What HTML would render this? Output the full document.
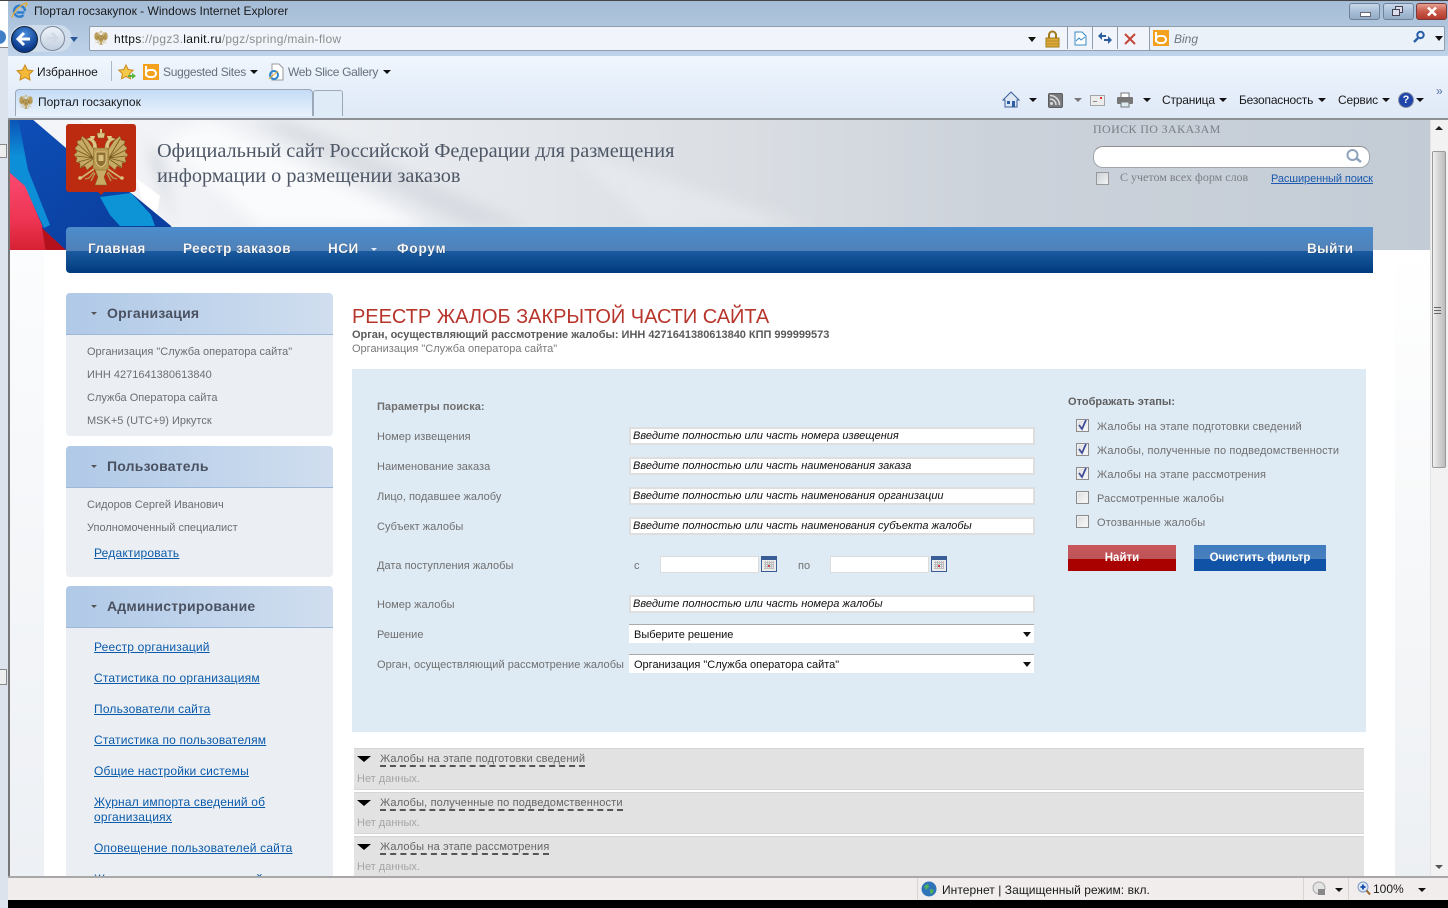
<!DOCTYPE html>
<html lang="ru"><head><meta charset="utf-8"><title>Портал госзакупок</title>
<style>
html,body{margin:0;padding:0;width:1448px;height:908px;overflow:hidden;background:#fff}
body{position:relative;font-family:"Liberation Sans",Arial,sans-serif;font-size:11px;color:#666}
.a,.t{position:absolute}
.t{white-space:nowrap;line-height:14px}
.c{color:#1a1a1a;font-size:12px}
.s{color:#6b6f75;font-size:11px;margin-top:1px}
.l{color:#0a5bab;font-size:12px;letter-spacing:.19px;text-decoration:underline}
.f{color:#707070;font-size:11px;letter-spacing:.03px;margin-top:1px}
.k{letter-spacing:.14px}
.in{position:absolute;left:629px;width:400px;height:14px;background:#fff;border:2px solid #dedede;font:italic 11px/14px "Liberation Sans",sans-serif;color:#111;padding-left:2px;white-space:nowrap;box-sizing:content-box}
.sel{position:absolute;left:629px;width:405px;height:18px;background:#fff;border-top:1px solid #aaa;font:11px/20px "Liberation Sans",sans-serif;color:#111;text-indent:5px;white-space:nowrap}
.sel:after{content:"";position:absolute;width:0;height:0;border:4px solid transparent;border-top:5px solid #111;border-bottom:0;right:3px;top:7px}
.ph{position:absolute;left:66px;width:267px;height:41px;border-radius:4px 4px 0 0;background:linear-gradient(90deg,#b0c9e7,#d0deef);border-bottom:1px solid #9db7d6}
.ph b{position:absolute;left:41px;top:12px;font-size:14px;line-height:16px;color:#4a5161;white-space:nowrap;letter-spacing:.2px}
.ph i{position:absolute;left:25px;top:19px;width:0;height:0;border:3px solid transparent;border-top:3px solid #555;border-bottom:0}
.pb{position:absolute;left:66px;width:267px;background:#ebeef2}
.cb{position:absolute;left:1076px;width:13px;height:13px;box-sizing:border-box;border:1px solid #8c8c8c;background:linear-gradient(135deg,#dcdcdc,#fafafa);box-shadow:inset 0 0 0 1px #f1f1f1}
.cb svg{position:absolute;left:0;top:-1px}
.gr{position:absolute;left:354px;width:1010px;background:#e2e2e2;border-bottom:1px solid #d6d6d6;border-top:1px solid #d6d6d6}
.gr i{position:absolute;left:3px;top:7px;width:0;height:0;border:7px solid transparent;border-top:6px solid #000;border-bottom:0}
.gr span{position:absolute;left:26px;top:4px;font-size:11px;line-height:12px;color:#666;white-space:nowrap;border-bottom:2px dashed #555;letter-spacing:.15px}
.gr em{position:absolute;left:3px;top:23px;font:11px/14px "Liberation Sans",sans-serif;color:#a5a5a5;white-space:nowrap}
.mt{font-size:13.5px;font-weight:bold;color:#f4f6fa;text-shadow:0 0 1px #234;letter-spacing:.5px;line-height:16px}
.ar{position:absolute;width:0;height:0;border:4px solid transparent;border-top:4px solid #111;border-bottom:0}
.sep{position:absolute;width:1px;background:#aab7c7}
.cm{letter-spacing:-.2px}
.g{font-size:12px;color:#666f7a;letter-spacing:-.3px}
</style></head><body>

<svg width="0" height="0" style="position:absolute"><defs>
<symbol id="eagle" viewBox="0 0 56 62">
<g id="halfL">
<path d="M21 22L15 13 9 8 8 12 4 13 5 17 2 20 4 24 1 27 4 30 3 34 7 35 7 40 12 38 14 42 21 36z" fill="#c7aa63" stroke="#7e6128" stroke-width=".5"/>
<path d="M20 30L9 11M20 30L5 16M20 30L3 22M20 30L3 28M20 30L5 34M20 31L8 39" stroke="#75591f" stroke-width=".8"/>
<path d="M25 25c-1-6-1-10-3-12-2-3-4-4-6-3l-3 1 4 2c2 1 3 3 3 7z" fill="#dcc484" stroke="#7e6128" stroke-width=".5"/>
<path d="M17 8h5l-1 3h-3z" fill="#e0c988"/>
<path d="M21 41L8 50" stroke="#cfb26b" stroke-width="1.800"/>
<path d="M21 44l-5 6-4 1M22 45l-4 8" fill="none" stroke="#b5964f" stroke-width="1.400"/>
<circle cx="7" cy="50" r="1.800" fill="#dcc484"/>
</g>
<use href="#halfL" transform="matrix(-1 0 0 1 56 0)"/>
<path d="M24 5h8l-1 5h-6z" fill="#dcc484" stroke="#7e6128" stroke-width=".5"/>
<path d="M28 1v4" stroke="#dcc484" stroke-width="2"/>
<path d="M21 20h14l1 20-8 6-8-6z" fill="#b99a50" stroke="#7e6128" stroke-width=".5"/>
<path d="M22 42h12l-3 7 3 8h-12l3-8z" fill="#c7aa63" stroke="#7e6128" stroke-width=".5"/>
<path d="M23 24h10v9c0 3-3 5-5 6-2-1-5-3-5-6z" fill="#8f7030" stroke="#e6d193" stroke-width=".8"/>
<path d="M25.500 27h5v6h-5z" fill="#d8bf7d"/>
</symbol></defs></svg>

<!-- left strip -->
<div class="a" style="left:0;top:0;width:9px;height:908px;background:#dde3ec"></div>
<div class="a" style="left:0;top:0;width:9px;height:48px;background:#fff"></div>
<div class="a" style="left:0;top:47px;width:9px;height:1px;background:#888"></div>
<div class="a" style="left:-8px;top:30px;width:14px;height:14px;border-radius:50%;background:#3f7ec4"></div>
<div class="a" style="left:0;top:144px;width:6px;height:12px;background:#eee;border:1px solid #888;border-left:0"></div>
<div class="a" style="left:0;top:669px;width:6px;height:14px;background:#eee;border:1px solid #888;border-left:0"></div>
<div class="a" style="left:8px;top:118px;width:2px;height:760px;background:#777"></div>

<!-- IE chrome -->
<div class="a" style="left:8px;top:0;width:1440px;height:57px;background:linear-gradient(180deg,#a5bcd6 0,#aec4dd 40%,#bfd4ea 100%)"></div>
<div class="a" style="left:0;top:0;width:1448px;height:1px;background:#444"></div>
<div class="a" style="left:8px;top:56px;width:1440px;height:62px;background:linear-gradient(180deg,#f1f7fe 0,#e9f1fb 30%,#dfe9f7 100%)"></div>
<div class="a" style="left:8px;top:118px;width:1440px;height:2px;background:#8e9296"></div>

<!-- IE logo -->
<svg class="a" style="left:11px;top:2px" width="17" height="17" viewBox="0 0 17 17"><path d="M13.500 10.500H5.500M14 9a5.500 5.500 0 10-1.500 4" fill="none" stroke="#2f7fce" stroke-width="2.400"/><path d="M1 15.500C3 9 9 3 15 1c2 0 0 3-1 4" fill="none" stroke="#e3ac36" stroke-width="1.400"/></svg>
<div class="t c" style="left:34px;top:4px">Портал госзакупок - Windows Internet Explorer</div>

<!-- window buttons -->
<div class="a" style="left:1349px;top:3px;width:29px;height:15px;border:1px solid #6f8299;border-radius:3px;background:linear-gradient(180deg,#c8d8ea 0,#a9bfd7 50%,#93abc6 100%)"><div class="a" style="left:10px;top:8px;width:9px;height:3px;background:#fff;border:1px solid #667"></div></div>
<div class="a" style="left:1383px;top:3px;width:29px;height:15px;border:1px solid #6f8299;border-radius:3px;background:linear-gradient(180deg,#c8d8ea 0,#a9bfd7 50%,#93abc6 100%)"><div class="a" style="left:11px;top:2px;width:6px;height:5px;border:1.500px solid #445;background:#dde"></div><div class="a" style="left:8px;top:5px;width:6px;height:5px;border:1.500px solid #445;background:#dde"></div></div>
<div class="a" style="left:1416px;top:3px;width:29px;height:15px;border:1px solid #7a3a3a;border-radius:3px;background:linear-gradient(180deg,#e6a090 0,#c9594a 50%,#b33a2c 100%)"><svg class="a" style="left:9px;top:2px" width="12" height="11"><path d="M2 1.500l8 8M10 1.500l-8 8" stroke="#fff" stroke-width="2.600"/></svg></div>

<!-- nav buttons -->
<div class="a" style="left:10px;top:25px;width:62px;height:27px;border-radius:14px;background:#cfdcec"></div>
<div class="a" style="left:11px;top:26px;width:25px;height:25px;border-radius:50%;background:radial-gradient(circle at 50% 30%,#4a8fe0,#0b3a8c 70%);border:1px solid #123"></div>
<svg class="a" style="left:14px;top:30px" width="20" height="18"><path d="M10 3L4 9l6 6M4 9h12" fill="none" stroke="#fff" stroke-width="3"/></svg>
<div class="a" style="left:40px;top:26px;width:23px;height:23px;border-radius:50%;background:linear-gradient(180deg,#eef3f9,#c2cfdf);border:1px solid #7d8a9b"></div>
<svg class="a" style="left:43px;top:31px" width="18" height="15"><path d="M9 2l5 5-5 5M14 7H4" fill="none" stroke="#cfd8e3" stroke-width="2.500"/></svg>
<div class="a" style="left:70px;top:37px;width:0;height:0;border:4px solid transparent;border-top:5px solid #2a5a9a;border-bottom:0"></div>

<!-- address bar -->
<div class="a" style="left:89px;top:26px;width:1105px;height:23px;background:#f1f5fb;border:1px solid #8f9dac;border-radius:2px"></div>
<svg class="a" style="left:93px;top:30px" width="16" height="16"><use href="#eagle" width="16" height="16"/></svg>
<div class="t" style="left:114px;top:32px;font-size:12px;color:#8c8c8c;letter-spacing:.3px"><span style="color:#111">https</span>://pgz3.<span style="color:#111">lanit.ru</span>/pgz/spring/main-flow</div>
<div class="ar" style="left:1028px;top:37px;border-top-width:5px"></div>
<svg class="a" style="left:1045px;top:30px" width="15" height="18" viewBox="0 0 15 18"><path d="M4 8V5a3.500 3.500 0 017 0v3" fill="none" stroke="#a07a1a" stroke-width="2"/><rect x="1" y="8" width="13" height="9" fill="#dca93a" stroke="#a07a1a"/><path d="M2 11h11M2 14h11" stroke="#b98d25"/></svg>
<div class="sep" style="left:1067px;top:27px;height:22px;background:#8f9dac"></div>
<div class="sep" style="left:1092px;top:27px;height:22px;background:#8f9dac"></div>
<div class="sep" style="left:1117px;top:27px;height:22px;background:#8f9dac"></div>
<svg class="a" style="left:1074px;top:31px" width="13" height="15"><path d="M1 1h7l4 4v9H1z" fill="#fff" stroke="#3c8ac4"/><path d="M2 10l3-3 2 2 4-3" fill="none" stroke="#3c8ac4"/></svg>
<svg class="a" style="left:1097px;top:31px" width="16" height="14"><path d="M1 5l4-4v3h4v2H5v3zM15 9l-4 4v-3H7V8h4V5z" fill="#2d5f9e"/></svg>
<svg class="a" style="left:1124px;top:33px" width="12" height="12"><path d="M1 1l10 10M11 1L1 11" stroke="#c4453a" stroke-width="2"/></svg>

<!-- search box -->
<div class="a" style="left:1149px;top:26px;width:294px;height:23px;background:#ebf1f9;border:1px solid #8f9dac;border-radius:2px"></div>
<div class="a" style="left:1153px;top:30px;width:16px;height:16px;background:#f4a11f"><div class="a" style="left:2px;top:2px;width:2px;height:10px;background:#fff"></div><div class="a" style="left:2px;top:5px;width:8px;height:5px;border:2px solid #fff;border-radius:5px"></div></div>
<div class="t" style="left:1174px;top:32px;font:italic 12px/14px 'Liberation Sans',sans-serif;color:#6f7780">Bing</div>
<svg class="a" style="left:1412px;top:30px" width="14" height="14"><circle cx="8.500" cy="5" r="3.200" fill="none" stroke="#2a5fa8" stroke-width="2"/><path d="M6 8l-4 4" stroke="#2a5fa8" stroke-width="2.400"/></svg>
<div class="ar" style="left:1435px;top:36px;border-top-width:5px"></div>

<!-- favorites bar -->
<svg class="a" style="left:16px;top:64px" width="18" height="17" viewBox="0 0 18 17"><path d="M9 1l2.400 5 5.600.7-4 3.900 1 5.400L9 13.400 4 16l1-5.400-4-3.900L6.600 6z" fill="#f5b93a" stroke="#c98a1c"/></svg>
<div class="t c" style="left:37px;top:65px">Избранное</div>
<div class="sep" style="left:111px;top:61px;height:20px"></div>
<svg class="a" style="left:118px;top:64px" width="18" height="17" viewBox="0 0 18 17"><path d="M8 1l2.200 4.500 5 .7-3.600 3.500.9 5L8 12.400 3.500 14.700l.9-5L.8 6.200l5-.7z" fill="#f5c94a" stroke="#c98a1c"/><path d="M10 11h4V9l4 3-4 3v-2h-4z" fill="#5ab53c"/></svg>
<div class="a" style="left:143px;top:64px;width:16px;height:16px;background:#f4a11f"><div class="a" style="left:2px;top:2px;width:2px;height:10px;background:#fff"></div><div class="a" style="left:2px;top:5px;width:8px;height:5px;border:2px solid #fff;border-radius:5px"></div></div>
<div class="t g" style="left:163px;top:65px">Suggested Sites</div>
<div class="ar" style="left:250px;top:70px"></div>
<svg class="a" style="left:268px;top:63px" width="16" height="18"><path d="M4 1h7l4 4v12H4z" fill="#fff" stroke="#999"/><circle cx="6" cy="12" r="4" fill="none" stroke="#2f86d0" stroke-width="2"/><path d="M1 16L10 8" stroke="#e6b030"/></svg>
<div class="t g" style="left:288px;top:65px">Web Slice Gallery</div>
<div class="ar" style="left:383px;top:70px"></div>

<!-- tabs -->
<div class="a" style="left:15px;top:89px;width:296px;height:26px;border:1px solid #9aa8b8;border-bottom:0;border-radius:4px 4px 0 0;background:linear-gradient(180deg,#c4dcf7,#e9f2fc)"></div>
<div class="a" style="left:313px;top:90px;width:28px;height:25px;border:1px solid #9aa8b8;border-bottom:0;border-radius:3px 3px 0 0;background:#e0ebf8"></div>
<svg class="a" style="left:18px;top:94px" width="16" height="16"><use href="#eagle" width="16" height="16"/></svg>
<div class="t c" style="left:38px;top:95px">Портал госзакупок</div>

<!-- command bar -->
<svg class="a" style="left:1002px;top:91px" width="18" height="17"><path d="M9 1L1 9h2v7h12V9h2z" fill="#dfe8f2" stroke="#3a5f9a"/><rect x="10" y="10" width="3" height="6" fill="#2a5fa8"/><rect x="5" y="10" width="3" height="3" fill="#2a5fa8"/></svg>
<div class="ar" style="left:1029px;top:98px"></div>
<div class="a" style="left:1048px;top:93px;width:13px;height:13px;border-radius:2px;background:#77797c;border:1px solid #5c5c5c"><svg class="a" style="left:0;top:0" width="12" height="12"><circle cx="2.500" cy="9.500" r="1.500" fill="#ddd"/><path d="M1 5a6 6 0 016 6M1 1.500A9.500 9.500 0 0110.500 11" fill="none" stroke="#ddd" stroke-width="1.500"/></svg></div>
<div class="ar" style="left:1074px;top:98px;border-top-color:#777"></div>
<div class="a" style="left:1090px;top:95px;width:13px;height:9px;background:#ececec;border:1px solid #a5a5a5"><div class="a" style="left:9px;top:1px;width:2px;height:2px;background:#d33"></div><div class="a" style="left:2px;top:5px;width:4px;height:1px;background:#888"></div></div>
<svg class="a" style="left:1116px;top:92px" width="18" height="16"><rect x="5" y="1" width="8" height="5" fill="#fff" stroke="#777"/><rect x="1" y="5" width="16" height="7" rx="1" fill="#777"/><rect x="5" y="10" width="8" height="5" fill="#dcecf5" stroke="#777"/></svg>
<div class="ar" style="left:1143px;top:98px"></div>
<div class="t c cm" style="left:1162px;top:93px">Страница</div><div class="ar" style="left:1219px;top:98px"></div>
<div class="t c cm" style="left:1239px;top:93px">Безопасность</div><div class="ar" style="left:1318px;top:98px"></div>
<div class="t c cm" style="left:1338px;top:93px">Сервис</div><div class="ar" style="left:1382px;top:98px"></div>
<div class="a" style="left:1398px;top:92px;width:14px;height:14px;border-radius:50%;background:#1f45a8;border:1px solid #8a93a5;color:#fff;font:bold 11px/14px 'Liberation Sans';text-align:center">?</div>
<div class="ar" style="left:1416px;top:98px"></div>
<div class="t" style="left:1436px;top:84px;font-size:12px;color:#5570a8">»</div>

<!-- page header -->
<div class="a" style="left:10px;top:120px;width:1420px;height:130px;overflow:hidden;background:#c3ccd6">
<svg width="1420" height="130" viewBox="0 0 1420 130" style="display:block"><defs>
<linearGradient id="g" x1="0" y1="0" x2="1" y2="0"><stop offset="0" stop-color="#f5f6f9"/><stop offset=".13" stop-color="#f0f2f5"/><stop offset=".3" stop-color="#e6e9ed"/><stop offset=".5" stop-color="#dbdfe4"/><stop offset=".7" stop-color="#ccd2da"/><stop offset="1" stop-color="#c3ccd6"/></linearGradient>
<linearGradient id="r" x1="0" y1="0" x2="0" y2="1"><stop offset="0" stop-color="#fb4a72"/><stop offset=".6" stop-color="#ee3553"/><stop offset="1" stop-color="#d52031"/></linearGradient>
<linearGradient id="bl" x1="0" y1="0" x2="1" y2="1"><stop offset="0" stop-color="#0d4fb8"/><stop offset="1" stop-color="#0a3a96"/></linearGradient>
<linearGradient id="cy" x1="0" y1="0" x2="0" y2="1"><stop offset="0" stop-color="#0b52b6"/><stop offset=".35" stop-color="#0d8fd8"/><stop offset="1" stop-color="#0d8fd8"/></linearGradient>
<filter id="b"><feGaussianBlur stdDeviation="7"/></filter></defs>
<rect width="1420" height="130" fill="url(#g)"/>
<g filter="url(#b)"><path d="M200 0L420 107H250L150 20z" fill="#fafbfd"/><path d="M120 0L138 25 165 107 150 40z" fill="#bfc5ce"/><path d="M280 0L520 107h-60L240 0z" fill="#cfd4db" opacity=".6"/><path d="M560 30L800 107H640z" fill="#eef0f3" opacity=".5"/></g>
<path d="M70 0h40L125 60 90 30z" fill="#fff" opacity=".7"/>
<path d="M126 58L150 76 146 98 132 80z" fill="#fff"/>
<path d="M-2 -2H21L56 28 121 73 161 106 170 132H-2z" fill="url(#bl)"/>
<path d="M-2 -2H8L18 50 40 105 34 108 14 65 -2 51z" fill="url(#cy)"/>
<path d="M90 77L121 73 144 98 145 106H110L100 95z" fill="#0d94d6"/>
<path d="M121 73L161 106H145L140 92z" fill="#0a3f9f"/>
<path d="M-2 51L15 66 32 105 36 132H-2z" fill="url(#r)"/>
<path d="M32 108L58 132H36z" fill="#b5111c"/>
</svg></div>
<div class="a" style="left:66px;top:124px;width:70px;height:68px;background:#bc2a10;border-radius:3px"></div>
<svg class="a" style="left:73px;top:128px" width="56" height="62"><use href="#eagle" width="56" height="62"/></svg>
<div class="a" style="left:98px;top:192px;width:0;height:0;border:3px solid transparent;border-top:3px solid #bc2a10;border-bottom:0"></div>

<div class="t" style="left:157px;top:139px;font:20.3px/25px 'Liberation Serif',serif;color:#4e5766;white-space:nowrap">Официальный сайт Российской Федерации для размещения<br>информации о размещении заказов</div>

<div class="t" style="left:1093px;top:122px;font:12px/14px 'Liberation Serif',serif;color:#7b7f85;letter-spacing:.37px">ПОИСК ПО ЗАКАЗАМ</div>
<div class="a" style="left:1093px;top:146px;width:275px;height:20px;background:#fff;border:1px solid #a2a6ab;border-top-color:#8e8e8e;border-radius:10px;box-sizing:content-box"></div>
<svg class="a" style="left:1345px;top:148px" width="18" height="16"><circle cx="7.500" cy="7" r="5" fill="none" stroke="#8ea3bb" stroke-width="2"/><path d="M11 10l5 4" stroke="#8ea3bb" stroke-width="2.500"/></svg>
<div class="a" style="left:1096px;top:172px;width:11px;height:11px;border:1px solid #999;background:linear-gradient(135deg,#ccd1d6,#f2f3f4)"></div>
<div class="t" style="left:1120px;top:170px;font:12px/14px 'Liberation Serif',serif;color:#7c7f84">С учетом всех форм слов</div>
<div class="t" style="left:1271px;top:172px;font-size:11px;color:#1a59ad;text-decoration:underline;letter-spacing:-.1px">Расширенный поиск</div>

<!-- page side shade -->
<div class="a" style="left:10px;top:250px;width:34px;height:627px;background:linear-gradient(180deg,#fbfcfd,#edf0f4)"></div>
<div class="a" style="left:1395px;top:250px;width:35px;height:627px;background:linear-gradient(180deg,#fff,#edf0f3)"></div>

<!-- menu -->
<div class="a" style="left:66px;top:227px;width:1307px;height:46px;border-radius:4px 0 0 4px;background:linear-gradient(180deg,#4c8dcc 0,#5081b8 52%,#1b5b9f 52%,#003a7e 100%)"></div>
<div class="t mt" style="left:88px;top:241px;letter-spacing:.4px">Главная</div>
<div class="t mt" style="left:183px;top:241px">Реестр заказов</div>
<div class="t mt" style="left:328px;top:241px">НСИ</div>
<div class="a" style="left:371px;top:248px;width:0;height:0;border:3px solid transparent;border-top:3px solid #e4ecf5;border-bottom:0"></div>
<div class="t mt" style="left:397px;top:241px;letter-spacing:.85px">Форум</div>
<div class="t mt" style="left:1307px;top:241px;letter-spacing:.4px">Выйти</div>

<!-- sidebar -->
<div class="ph" style="top:293px"><i></i><b>Организация</b></div>
<div class="pb" style="top:335px;height:101px;border-radius:0 0 4px 4px"></div>
<div class="t s" style="left:87px;top:344px">Организация "Служба оператора сайта"</div>
<div class="t s" style="left:87px;top:367px">ИНН 4271641380613840</div>
<div class="t s" style="left:87px;top:390px">Служба Оператора сайта</div>
<div class="t s" style="left:87px;top:413px">MSK+5 (UTC+9) Иркутск</div>

<div class="ph" style="top:446px"><i></i><b>Пользователь</b></div>
<div class="pb" style="top:488px;height:89px;border-radius:0 0 4px 4px"></div>
<div class="t s" style="left:87px;top:497px">Сидоров Сергей Иванович</div>
<div class="t s" style="left:87px;top:520px">Уполномоченный специалист</div>
<div class="t l" style="left:94px;top:546px">Редактировать</div>

<div class="ph" style="top:586px"><i></i><b>Администрирование</b></div>
<div class="pb" style="top:628px;height:249px"></div>
<div class="t l" style="left:94px;top:640px">Реестр организаций</div>
<div class="t l" style="left:94px;top:671px">Статистика по организациям</div>
<div class="t l" style="left:94px;top:702px">Пользователи сайта</div>
<div class="t l" style="left:94px;top:733px">Статистика по пользователям</div>
<div class="t l" style="left:94px;top:764px">Общие настройки системы</div>
<div class="t l" style="left:94px;top:795px;line-height:15px">Журнал импорта сведений об<br>организациях</div>
<div class="t l" style="left:94px;top:841px">Оповещение пользователей сайта</div>
<div class="t l" style="left:94px;top:872px">Журнал системных операций</div>

<!-- main -->
<div class="t" style="left:352px;top:305px;font-size:20px;line-height:24px;color:#b8352c;letter-spacing:-.03px">РЕЕСТР ЖАЛОБ ЗАКРЫТОЙ ЧАСТИ САЙТА</div>
<div class="t" style="left:352px;top:328px;font-size:11px;font-weight:bold;color:#5a5a5a;letter-spacing:-.02px">Орган, осуществляющий рассмотрение жалобы: ИНН 4271641380613840 КПП 999999573</div>
<div class="t" style="left:352px;top:342px;font-size:11px;color:#7a7a7a">Организация "Служба оператора сайта"</div>

<div class="a" style="left:352px;top:369px;width:1014px;height:363px;background:#deeaf4"></div>
<div class="t f" style="left:377px;top:399px;font-weight:bold">Параметры поиска:</div>
<div class="t f" style="left:377px;top:429px">Номер извещения</div>
<div class="t f" style="left:377px;top:459px">Наименование заказа</div>
<div class="t f" style="left:377px;top:489px">Лицо, подавшее жалобу</div>
<div class="t f" style="left:377px;top:519px">Субъект жалобы</div>
<div class="t f" style="left:377px;top:558px">Дата поступления жалобы</div>
<div class="t f" style="left:377px;top:597px">Номер жалобы</div>
<div class="t f" style="left:377px;top:627px">Решение</div>
<div class="t f" style="left:377px;top:657px">Орган, осуществляющий рассмотрение жалобы</div>

<div class="in" style="top:427px">Введите полностью или часть номера извещения</div>
<div class="in" style="top:457px">Введите полностью или часть наименования заказа</div>
<div class="in" style="top:487px">Введите полностью или часть наименования организации</div>
<div class="in" style="top:517px">Введите полностью или часть наименования субъекта жалобы</div>
<div class="in" style="top:595px">Введите полностью или часть номера жалобы</div>
<div class="sel" style="top:624px">Выберите решение</div>
<div class="sel" style="top:654px">Организация "Служба оператора сайта"</div>

<div class="t f" style="left:634px;top:558px">с</div>
<div class="a" style="left:660px;top:556px;width:97px;height:15px;background:#fff;border:1px solid #dcdcdc"></div>
<svg class="a" style="left:761px;top:556px" width="16" height="16"><rect x=".5" y=".5" width="15" height="15" fill="#ececec" stroke="#3a5d95"/><rect x="1" y="1" width="14" height="3" fill="#3a5d95"/><path d="M3 6.500h10M3 8.500h10M3 10.500h10M3 12.500h10M4.500 5v8M6.500 5v8M8.500 5v8M10.500 5v8M12.500 5v8" stroke="#bdbdbd"/><rect x="7" y="9" width="2" height="2" fill="#c44"/></svg>
<div class="t f" style="left:798px;top:558px">по</div>
<div class="a" style="left:830px;top:556px;width:97px;height:15px;background:#fff;border:1px solid #dcdcdc"></div>
<svg class="a" style="left:931px;top:556px" width="16" height="16"><rect x=".5" y=".5" width="15" height="15" fill="#ececec" stroke="#3a5d95"/><rect x="1" y="1" width="14" height="3" fill="#3a5d95"/><path d="M3 6.500h10M3 8.500h10M3 10.500h10M3 12.500h10M4.500 5v8M6.500 5v8M8.500 5v8M10.500 5v8M12.500 5v8" stroke="#bdbdbd"/><rect x="7" y="9" width="2" height="2" fill="#c44"/></svg>

<div class="t f" style="left:1068px;top:394px;font-weight:bold;color:#5f5f5f">Отображать этапы:</div>
<div class="cb" style="top:419px"><svg width="11" height="12"><path d="M2 6l3 4 4-9" fill="none" stroke="#414f9c" stroke-width="1.800"/></svg></div>
<div class="t f k" style="left:1097px;top:419px">Жалобы на этапе подготовки сведений</div>
<div class="cb" style="top:443px"><svg width="11" height="12"><path d="M2 6l3 4 4-9" fill="none" stroke="#414f9c" stroke-width="1.800"/></svg></div>
<div class="t f k" style="left:1097px;top:443px">Жалобы, полученные по подведомственности</div>
<div class="cb" style="top:467px"><svg width="11" height="12"><path d="M2 6l3 4 4-9" fill="none" stroke="#414f9c" stroke-width="1.800"/></svg></div>
<div class="t f k" style="left:1097px;top:467px">Жалобы на этапе рассмотрения</div>
<div class="cb" style="top:491px"></div>
<div class="t f k" style="left:1097px;top:491px">Рассмотренные жалобы</div>
<div class="cb" style="top:515px"></div>
<div class="t f k" style="left:1097px;top:515px">Отозванные жалобы</div>

<div class="a" style="left:1068px;top:545px;width:108px;height:26px;background:linear-gradient(180deg,#c9585c 0,#bd5358 54%,#a90000 54%,#a90000 100%);color:#fff;font:bold 11.500px/27px 'Liberation Sans';text-align:center">Найти</div>
<div class="a" style="left:1194px;top:545px;width:132px;height:26px;background:linear-gradient(180deg,#3e7bc0 0,#4a80bd 54%,#1053a6 54%,#1053a6 100%);color:#fff;font:bold 11.500px/27px 'Liberation Sans';text-align:center">Очистить фильтр</div>

<div class="gr" style="top:748px;height:40px"><i></i><span>Жалобы на этапе подготовки сведений</span><em>Нет данных.</em></div>
<div class="gr" style="top:792px;height:40px"><i></i><span>Жалобы, полученные по подведомственности</span><em>Нет данных.</em></div>
<div class="gr" style="top:836px;height:41px"><i></i><span>Жалобы на этапе рассмотрения</span><em>Нет данных.</em></div>

<!-- scrollbar -->
<div class="a" style="left:1430px;top:120px;width:18px;height:757px;background:#f2f2f2;border-left:1px solid #e4e4e4;box-sizing:border-box"></div>
<div class="a" style="left:1432px;top:151px;width:14px;height:317px;background:linear-gradient(90deg,#f0f0f0,#d8d8d8 40%,#bcbcbc);border:1px solid #9a9a9a;border-radius:2px;box-sizing:border-box"></div>
<div class="a" style="left:1435px;top:126px;width:0;height:0;border:4px solid transparent;border-bottom:4px solid #222;border-top:0"></div>
<div class="a" style="left:1435px;top:865px;width:0;height:0;border:4px solid transparent;border-top:4px solid #555;border-bottom:0"></div>
<div class="a" style="left:1434px;top:307px;width:7px;height:7px;background:repeating-linear-gradient(180deg,#666 0 1px,transparent 1px 3px)"></div>

<!-- status bar -->
<div class="a" style="left:8px;top:876px;width:1440px;height:2px;background:#a8a8a8"></div>
<div class="a" style="left:8px;top:878px;width:1440px;height:22px;background:#f0edec"></div>
<div class="a" style="left:8px;top:900px;width:1440px;height:8px;background:#000"></div>
<div class="sep" style="left:917px;top:878px;height:22px;background:#d8d4d2"></div>
<div class="sep" style="left:1303px;top:878px;height:22px;background:#d8d4d2"></div>
<div class="sep" style="left:1348px;top:878px;height:22px;background:#d8d4d2"></div>
<svg class="a" style="left:921px;top:881px" width="16" height="16"><circle cx="8" cy="8" r="7.500" fill="#2f73b8"/><path d="M3 5l4-2 1 3-3 3zM9 8l4 1-2 4-2-1z" fill="#4fb05a"/></svg>
<div class="t c" style="left:942px;top:883px;letter-spacing:.06px">Интернет | Защищенный режим: вкл.</div>
<svg class="a" style="left:1310px;top:881px" width="18" height="16"><circle cx="9" cy="7" r="6" fill="#e3e3e3" stroke="#aaa"/><rect x="8" y="8" width="7" height="6" fill="#888"/></svg>
<div class="ar" style="left:1335px;top:888px"></div>
<svg class="a" style="left:1357px;top:881px" width="14" height="15"><circle cx="6" cy="6" r="5" fill="#dfe9f6" stroke="#7a95c0"/><path d="M3.500 6h5M6 3.500v5" stroke="#1f55b0" stroke-width="2"/><path d="M9.500 9.500l3.500 4" stroke="#94652c" stroke-width="2"/></svg>
<div class="t c" style="left:1373px;top:882px">100%</div>
<div class="ar" style="left:1418px;top:888px"></div>
</body></html>
